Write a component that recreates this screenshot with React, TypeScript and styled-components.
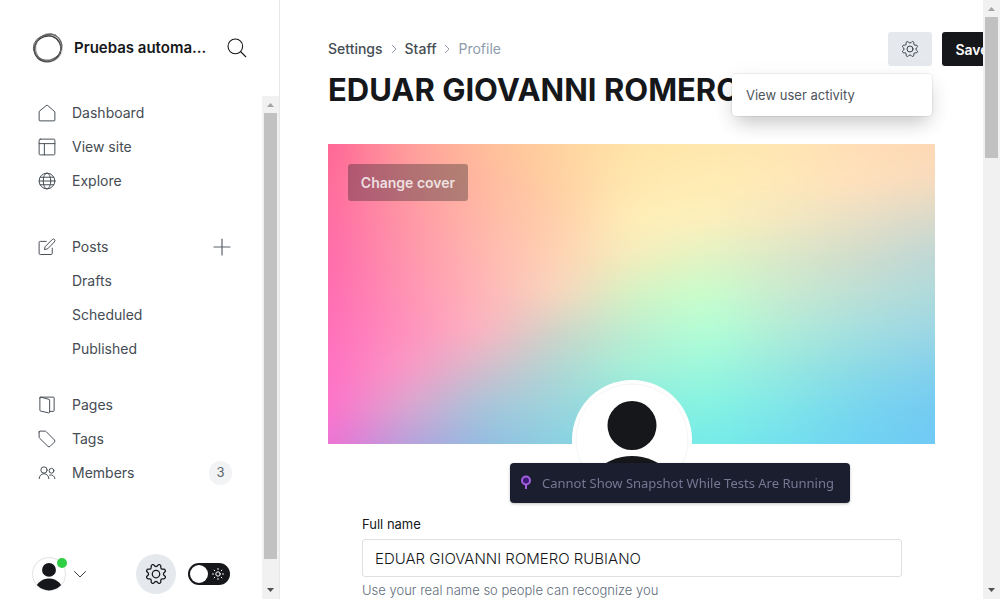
import React from "react";
import styled, { createGlobalStyle, css } from "styled-components";

const GlobalStyle = createGlobalStyle`
  *, *::before, *::after { box-sizing: border-box; }
  body {
    margin: 0;
    background: #fff;
    color: #15171a;
    font-family: Inter, "Liberation Sans", sans-serif;
    font-size: 14px;
    overflow: hidden;
  }
  button, input { font: inherit; color: inherit; }
  button { border: 0; padding: 0; background: none; cursor: pointer; }
  a { color: inherit; text-decoration: none; }
`;

/* Shell */

const Shell = styled.div`
  display: flex;
  height: 100vh;
`;

const Sidebar = styled.aside`
  flex: 0 0 280px;
  display: flex;
  flex-direction: column;
  border-right: 1px solid #e5e7e9;
`;

const SiteHeader = styled.header`
  flex: none;
  display: flex;
  align-items: center;
  height: 96px;
  padding: 0 32px;
`;

const SiteName = styled.div`
  flex: 1;
  margin-left: 10px;
  font-size: 15px;
  line-height: 20px;
  font-weight: 600;
  white-space: nowrap;
`;

const IconButton = styled.button`
  display: inline-flex;
  align-items: center;
  justify-content: center;
`;

const SidebarBody = styled.div`
  flex: 1;
  min-height: 0;
  display: flex;
`;

const SidebarColumn = styled.div`
  flex: 1;
  display: flex;
  flex-direction: column;
  justify-content: space-between;
`;

const NavList = styled.ul`
  list-style: none;
  margin: 0 0 32px;
  padding: 0 30px 0 38px;

  & + & { margin-bottom: 22px; }
`;

const NavItem = styled.li`
  display: flex;
  align-items: center;
  justify-content: space-between;
  height: 34px;
`;

const NavLink = styled.a<{ $nested?: boolean }>`
  display: flex;
  align-items: center;
  gap: 16px;
  padding-left: ${(p) => (p.$nested ? 34 : 0)}px;
  font-size: 14px;
  line-height: 18px;
  color: #454c53;
`;

const Icon = styled.svg<{ $size?: number }>`
  display: block;
  flex: none;
  width: ${(p) => p.$size ?? 18}px;
  height: ${(p) => p.$size ?? 18}px;
  fill: none;
  stroke: currentColor;
  stroke-linecap: round;
  stroke-linejoin: round;
`;

const Count = styled.span`
  width: 23px;
  height: 24px;
  border-radius: 12px;
  background: #f1f3f4;
  color: #5d666f;
  font-size: 13px;
  line-height: 23px;
  text-align: center;
`;

const SidebarFooter = styled.div`
  display: flex;
  align-items: center;
  height: 50px;
  padding: 0 32px;
`;

const UserButton = styled(IconButton)`
  position: relative;
  gap: 8px;
  margin-right: auto;
  color: #394047;
`;

const OnlineDot = styled.span`
  position: absolute;
  left: 25px;
  top: 1px;
  width: 10px;
  height: 10px;
  border-radius: 50%;
  background: #30cf43;
`;

const RoundButton = styled(IconButton)`
  width: 40px;
  height: 40px;
  margin-right: 12px;
  border-radius: 50%;
  background: #e5e9ed;
`;

const Toggle = styled.label`
  display: flex;
  align-items: center;
  justify-content: space-between;
  width: 42px;
  height: 22px;
  padding: 0 6px 0 2px;
  border-radius: 11px;
  background: #15171a;
  color: #fff;
  cursor: pointer;

  input {
    appearance: none;
    width: 18px;
    height: 18px;
    margin: 0;
    border-radius: 50%;
    background: #fff;
  }
`;

/* Scroll bars */

const Track = styled.div`
  flex: 0 0 17px;
  display: flex;
  flex-direction: column;
  background: #f1f1f1;
`;

const Arrow = styled.svg`
  flex: none;
  width: 17px;
  height: 17px;
`;

const Groove = styled.div`
  flex: 1;
  padding: 0 2px;
`;

const Thumb = styled.div<{ $share: number }>`
  height: ${(p) => p.$share}%;
  background: #c1c1c1;
`;

function ScrollBar({ share }: { share: number }) {
  return (
    <Track aria-hidden="true">
      <Arrow viewBox="0 0 17 17">
        <path d="M5 11h7L8.500 7z" fill="#a3a3a3" />
      </Arrow>
      <Groove>
        <Thumb $share={share} />
      </Groove>
      <Arrow viewBox="0 0 17 17">
        <path d="M5 6h7L8.500 10z" fill="#505050" />
      </Arrow>
    </Track>
  );
}

/* Main area */

const Main = styled.main`
  flex: 1;
  min-width: 0;
  overflow: hidden;
  padding: 0 48px;
`;

const PageHeader = styled.header`
  display: flex;
  align-items: flex-start;
  gap: 10px;
  height: 144px;
  margin-right: -67px;
  padding-top: 32px;
`;

const Heading = styled.div`
  flex: 1;
  min-width: 0;
  padding-top: 8px;
`;

const Breadcrumb = styled.nav`
  display: flex;
  align-items: center;
  gap: 7px;
  height: 18px;
  font-size: 14px;
  line-height: 16px;
  font-weight: 500;
  color: #454c53;

  svg { color: #8e9cac; }
  span { color: #8e9cac; font-weight: 400; }
`;

const Title = styled.h1`
  margin: 11px 0 0;
  font-size: 31px;
  line-height: 42px;
  font-weight: 700;
  white-space: nowrap;
  overflow: hidden;
  text-overflow: ellipsis;
`;

const MenuAnchor = styled.div`
  position: relative;
  flex: none;
`;

const buttonShape = css`
  height: 34px;
  border-radius: 3px;
`;

const GearButton = styled(IconButton)`
  ${buttonShape}
  width: 44px;
  background: #e5e9ed;
  color: #394047;
`;

const SaveButton = styled.button`
  ${buttonShape}
  flex: none;
  width: 60px;
  background: #15171a;
  color: #fff;
  font-weight: 600;
`;

const Menu = styled.ul`
  position: absolute;
  z-index: 1;
  top: 42px;
  right: 0;
  width: 200px;
  margin: 0;
  padding: 6px 0;
  list-style: none;
  border-radius: 4px;
  background: #fff;
  box-shadow: 0 0 0 1px rgba(0, 0, 0, 0.06), 0 10px 20px -4px rgba(0, 0, 0, 0.2),
    0 4px 26px rgba(0, 0, 0, 0.05);

  a {
    display: block;
    padding: 0 14px;
    font-size: 13px;
    line-height: 30px;
    color: #4d545b;
  }
`;

const Cover = styled.section`
  position: relative;
  height: 300px;
  padding: 20px;
`;

const CoverArt = styled.svg`
  position: absolute;
  inset: 0;
  width: 100%;
  height: 100%;
`;

const CoverButton = styled.button`
  position: relative;
  width: 120px;
  height: 37px;
  border-radius: 3px;
  background: rgba(21, 23, 26, 0.33);
  color: rgba(255, 255, 255, 0.8);
  font-weight: 600;
`;

const Avatar = styled.div`
  position: absolute;
  left: 50%;
  top: 236px;
  width: 120px;
  height: 120px;
  margin-left: -60px;

  svg { display: block; width: 100%; height: 100%; }
`;

const ProfileForm = styled.form`
  display: flex;
  flex-direction: column;
  padding: 72px 33px 48px 34px;
`;

const FieldLabel = styled.label`
  margin-bottom: 7px;
  font-size: 13px;
  line-height: 16px;
  color: #15171a;
`;

const TextInput = styled.input`
  width: 100%;
  height: 38px;
  padding: 0 12px;
  border: 1px solid #dddfe1;
  border-radius: 3px;
  background: #fff;
  font-size: 15px;
  font-weight: 300;
  outline: none;
`;

const Hint = styled.p`
  margin: 4px 0 0;
  font-size: 13px;
  line-height: 18px;
  font-weight: 300;
  color: #5f6d7b;
`;

const Notice = styled.div`
  position: fixed;
  z-index: 2;
  left: 68%;
  bottom: 96px;
  display: flex;
  align-items: center;
  gap: 10px;
  width: 340px;
  height: 40px;
  margin-left: -170px;
  padding: 0 10px;
  border-radius: 4px;
  background: #1b1e2e;
  box-shadow: 0 1px 3px rgba(0, 0, 0, 0.25);
  color: #747994;
  font-family: "Noto Sans", "Open Sans", sans-serif;
  font-size: 13px;
  line-height: 20px;
  white-space: nowrap;
`;

/* Cover colours, evenly spaced from left to right, one list per row */
const coverRows = [
  "ff6496 ff9c9b ffbd9a ffd29e ffe4a8 ffe8ad ffe6b3 ffdeb6 ffd8b6",
  "ff6a9c ff989f ffb8a0 ffd0a2 ffe8ae ffecb4 ffe8b8 ffe0bc f6dcbe",
  "ff6ca4 ff95a6 ffb8a8 ffcfaa ffeeb8 fdf0bc f4e8c0 e8dfc6 d8d9ca",
  "ff6bab ff94ac ffb6b0 ffd2b4 f4eebc e2f4c4 dae8c8 d0dccc bed8d6",
  "ff6db2 ff92b4 ffb4b8 f8d6be d4f2c4 c8fecc c8ead0 bcdfd6 aedadc",
  "ff6fba ff90bd fcb4c2 cfd4c8 bceed0 b2ffd6 b0ecd8 a4dfe0 9cd6e5",
  "ff70c2 fb98c6 d4bccc b0d6d4 a4f0d8 9cf8dc 96e8e0 8cdae6 84d0ec",
  "ff72ca dca4d0 a8c4da 9cd4dc 8ce8e0 84f4e2 80e6e8 78d6ee 74cbf2",
  "ee72d4 b8a0dc 94bce0 8ad0e2 7ce0e8 76ece8 72e0ee 70d2f2 70c9f5",
].map((row) => row.split(" "));

function CoverGradient() {
  const last = coverRows.length - 1;
  const bounds = { x: -100, y: -100, width: 1000, height: 1000 };
  return (
    <CoverArt viewBox="0 0 800 800" preserveAspectRatio="none" aria-hidden="true">
      <defs>
        <filter id="blend" filterUnits="userSpaceOnUse" colorInterpolationFilters="sRGB" {...bounds}>
          <feGaussianBlur stdDeviation="20" />
        </filter>
        {coverRows.map((colors, i) => (
          <React.Fragment key={i}>
            <linearGradient id={`row${i}`} gradientUnits="userSpaceOnUse" x1="0" y1="0" x2="800" y2="0">
              {colors.map((c, j) => (
                <stop key={j} offset={j / (colors.length - 1)} stopColor={`#${c}`} />
              ))}
            </linearGradient>
            <linearGradient id={`fade${i}`} gradientUnits="userSpaceOnUse" x1="0" y1="0" x2="0" y2="800">
              <stop offset={Math.max(0, (i - 1) / last)} stopColor="#fff" stopOpacity={i ? 0 : 1} />
              <stop offset={i / last} stopColor="#fff" />
            </linearGradient>
            <mask id={`mask${i}`} maskUnits="userSpaceOnUse" {...bounds}>
              <rect {...bounds} fill={`url(#fade${i})`} />
            </mask>
          </React.Fragment>
        ))}
      </defs>
      <g filter="url(#blend)">
        {coverRows.map((_, i) => (
          <rect key={i} {...bounds} fill={`url(#row${i})`} mask={`url(#mask${i})`} />
        ))}
      </g>
    </CoverArt>
  );
}

/* Drawings */

function Gear({ size, stroke = 1.5 }: { size: number; stroke?: number }) {
  return (
    <Icon viewBox="0 0 24 24" $size={size} strokeWidth={stroke} aria-hidden="true">
      <circle cx="12" cy="12" r="4.500" />
      <path d="M10.546 2.438a1.957 1.957 0 0 0 2.908 0L14.400 1.400a1.959 1.959 0 0 1 3.410 1.413l-.071 1.400A1.958 1.958 0 0 0 19.790 6.266l1.400-.071A1.959 1.959 0 0 1 22.600 9.600l-1.038.946a1.957 1.957 0 0 0 0 2.908L22.600 14.400a1.959 1.959 0 0 1-1.413 3.410l-1.400-.071a1.958 1.958 0 0 0-2.056 2.056l.071 1.400A1.959 1.959 0 0 1 14.400 22.600l-.941-1.041a1.957 1.957 0 0 0-2.908 0L9.606 22.600A1.959 1.959 0 0 1 6.200 21.192l.072-1.400a1.958 1.958 0 0 0-2.056-2.056l-1.400.071A1.958 1.958 0 0 1 1.400 14.400l1.041-.941a1.957 1.957 0 0 0 0-2.908L1.400 9.606A1.958 1.958 0 0 1 2.808 6.200l1.400.071A1.958 1.958 0 0 0 6.269 4.211L6.200 2.810A1.959 1.959 0 0 1 9.606 1.400Z" />
    </Icon>
  );
}

function Person({ size, ring, frame }: { size: number; ring: string; frame: number }) {
  const id = `person${size}`;
  return (
    <svg width={size} height={size} viewBox="0 0 120 120" aria-hidden="true">
      <clipPath id={id}>
        <circle cx="60" cy="60" r={60 - frame} />
      </clipPath>
      <circle cx="60" cy="60" r="60" fill="#fff" />
      <circle cx="60" cy="60" r={60 - frame} fill="none" stroke={ring} strokeWidth={frame > 3 ? 1 : 4} />
      <circle cx="60" cy="45.500" r="24.500" fill="#15171a" />
      <circle cx="60" cy="128" r="52" fill="#15171a" clipPath={`url(#${id})`} />
    </svg>
  );
}

function NavIcon({ children }: { children: React.ReactNode }) {
  return (
    <Icon viewBox="0 0 24 24" $size={18} strokeWidth="1.300" aria-hidden="true">
      {children}
    </Icon>
  );
}

function Logo() {
  return (
    <Icon viewBox="0 0 32 32" $size={32} aria-hidden="true">
      <path fill="#d0d0d0" fillRule="evenodd" stroke="none" d="M17 1.200C24 .800 30.500 7 31 15C31 24 25 30.500 15.500 30.800C7 30.800 1.500 24 1.300 16.500C1.600 7.500 9 2 17 1.200ZM17 4C9.500 4 3.800 9.500 3.500 16C3.600 23 9 28.500 16 28.600C23 28.500 28.300 23 28.500 16C28.300 9 23.500 4.200 17 4Z" />
      <ellipse cx="15.200" cy="16.500" rx="13.500" ry="12.600" stroke="#2a2a2a" strokeWidth="1" transform="rotate(-35 16 16)" />
      <ellipse cx="15.500" cy="16.800" rx="14" ry="13" stroke="#555" strokeWidth=".9" transform="rotate(20 16 16)" />
      <ellipse cx="17" cy="16" rx="14" ry="12.600" stroke="#777" strokeWidth=".8" transform="rotate(-60 16 16)" />
      <ellipse cx="15.500" cy="15.500" rx="12.600" ry="14.200" stroke="#555" strokeWidth=".8" transform="rotate(60 16 16)" />
    </Icon>
  );
}

const Chevron = () => (
  <Icon viewBox="0 0 8 8" $size={8} aria-hidden="true">
    <path d="M2 0L6 4L2 8" />
  </Icon>
);

export default function App() {
  return (
    <>
      <GlobalStyle />
      <Shell>
        <Sidebar>
          <SiteHeader>
            <Logo />
            <SiteName>Pruebas automa...</SiteName>
            <IconButton aria-label="Search">
              <Icon viewBox="0 0 24 24" $size={20} strokeWidth="1.300" aria-hidden="true">
                <circle cx="10" cy="10" r="8.800" />
                <path d="M16.500 16.500L22.500 22.500" />
              </Icon>
            </IconButton>
          </SiteHeader>
          <SidebarBody>
            <SidebarColumn>
              <nav>
                <NavList>
                  <NavItem>
                    <NavLink href="#dashboard">
                      <NavIcon>
                        <path d="M1.500 10.500v11a1 1 0 0 0 1 1h19a1 1 0 0 0 1-1v-11L13 2a1.500 1.500 0 0 0-2 0z" />
                      </NavIcon>
                      Dashboard
                    </NavLink>
                  </NavItem>
                  <NavItem>
                    <NavLink href="#site">
                      <NavIcon>
                        <rect x="1.500" y="1.500" width="21" height="21" rx="1.500" />
                        <path d="M1.500 7.500h21M8.500 7.500v15" />
                      </NavIcon>
                      View site
                    </NavLink>
                  </NavItem>
                  <NavItem>
                    <NavLink href="#explore">
                      <NavIcon>
                        <circle cx="12" cy="12" r="10.500" />
                        <ellipse cx="12" cy="12" rx="5" ry="10.500" />
                        <path d="M1.500 12h21M3 7h18M3 17h18" />
                      </NavIcon>
                      Explore
                    </NavLink>
                  </NavItem>
                </NavList>
                <NavList>
                  <NavItem>
                    <NavLink href="#posts">
                      <NavIcon>
                        <path d="M19 13.500v7a1.500 1.500 0 0 1-1.500 1.500H3a1.500 1.500 0 0 1-1.500-1.500V6A1.500 1.500 0 0 1 3 4.500h8" />
                        <path d="M12.500 14.500l-4 1 1-4L19 2a1.900 1.900 0 0 1 3 3z" />
                      </NavIcon>
                      Posts
                    </NavLink>
                    <IconButton aria-label="New post">
                      <Icon viewBox="0 0 20 20" $size={20} strokeWidth="1.200" aria-hidden="true">
                        <path d="M10 2v16M2 10h16" stroke="#5b6168" />
                      </Icon>
                    </IconButton>
                  </NavItem>
                  {["Drafts", "Scheduled", "Published"].map((name) => (
                    <NavItem key={name}>
                      <NavLink $nested href={`#${name.toLowerCase()}`}>
                        {name}
                      </NavLink>
                    </NavItem>
                  ))}
                </NavList>
                <NavList>
                  <NavItem>
                    <NavLink href="#pages">
                      <NavIcon>
                        <path d="M16 20.500h4.500a1 1 0 0 0 1-1v-17a1 1 0 0 0-1-1h-17" />
                        <path d="M2.500 2.500v16.500a1 1 0 0 0 .8 1l11 2.500a1 1 0 0 0 1.200-1V5.500a1 1 0 0 0-.8-1L3.700 1.500a1 1 0 0 0-1.200 1z" />
                      </NavIcon>
                      Pages
                    </NavLink>
                  </NavItem>
                  <NavItem>
                    <NavLink href="#tags">
                      <NavIcon>
                        <path d="M1.500 2.500v7a2 2 0 0 0 .6 1.400l11.200 11a2 2 0 0 0 2.800 0l5.800-5.800a2 2 0 0 0 0-2.800L10.800 2.100a2 2 0 0 0-1.400-.6H2.500a1 1 0 0 0-1 1z" />
                      </NavIcon>
                      Tags
                    </NavLink>
                  </NavItem>
                  <NavItem>
                    <NavLink href="#members">
                      <NavIcon>
                        <circle cx="8" cy="8" r="4.200" />
                        <circle cx="18" cy="9" r="3.200" />
                        <path d="M1.500 19.500a6.500 6.500 0 0 1 13 0M15.500 14.800a5 5 0 0 1 7 4.700" />
                      </NavIcon>
                      Members
                    </NavLink>
                    <Count>3</Count>
                  </NavItem>
                </NavList>
              </nav>
              <SidebarFooter>
                <UserButton aria-label="User menu">
                  <Person size={34} ring="#e5e7e9" frame={2} />
                  <OnlineDot />
                  <Icon viewBox="0 0 12 12" $size={12} aria-hidden="true">
                    <path d="M0.500 3.500L6 9L11.500 3.500" />
                  </Icon>
                </UserButton>
                <RoundButton aria-label="Settings">
                  <Gear size={20} />
                </RoundButton>
                <Toggle>
                  <input type="checkbox" aria-label="Night shift" />
                  <Icon viewBox="0 0 12 12" $size={12} aria-hidden="true">
                    <circle cx="6" cy="6" r="2.200" />
                    <path d="M6 .5v1M6 10.500v1M.5 6h1M10.500 6h1M2.100 2.100l.7.7M9.200 9.200l.7.7M2.100 9.900l.7-.7M9.200 2.800l.7-.7" />
                  </Icon>
                </Toggle>
              </SidebarFooter>
            </SidebarColumn>
            <ScrollBar share={95} />
          </SidebarBody>
        </Sidebar>

        <Main>
          <PageHeader>
            <Heading>
              <Breadcrumb aria-label="Breadcrumb">
                <a href="#settings">Settings</a>
                <Chevron />
                <a href="#staff">Staff</a>
                <Chevron />
                <span>Profile</span>
              </Breadcrumb>
              <Title>EDUAR GIOVANNI ROMERO RUBIANO</Title>
            </Heading>
            <MenuAnchor>
              <GearButton aria-label="Actions" aria-expanded="true">
                <Gear size={16} stroke={1.5} />
              </GearButton>
              <Menu>
                <li>
                  <a href="#activity">View user activity</a>
                </li>
              </Menu>
            </MenuAnchor>
            <SaveButton>Save</SaveButton>
          </PageHeader>
          <Cover>
            <CoverGradient />
            <CoverButton>Change cover</CoverButton>
            <Avatar>
              <Person size={120} ring="#f4f5f6" frame={4} />
            </Avatar>
          </Cover>
          <ProfileForm>
            <FieldLabel htmlFor="full-name">Full name</FieldLabel>
            <TextInput id="full-name" defaultValue="EDUAR GIOVANNI ROMERO RUBIANO" />
            <Hint>Use your real name so people can recognize you</Hint>
          </ProfileForm>
        </Main>
        <ScrollBar share={25} />
      </Shell>
      <Notice role="status">
        <svg width="12" height="16" viewBox="0 0 12 16" aria-hidden="true">
          <path d="M6 9v5" stroke="#a35fe0" strokeWidth="2" />
          <circle cx="6" cy="5.500" r="4" fill="#3d1a78" stroke="#a35fe0" strokeWidth="2" />
        </svg>
        Cannot Show Snapshot While Tests Are Running
      </Notice>
    </>
  );
}
